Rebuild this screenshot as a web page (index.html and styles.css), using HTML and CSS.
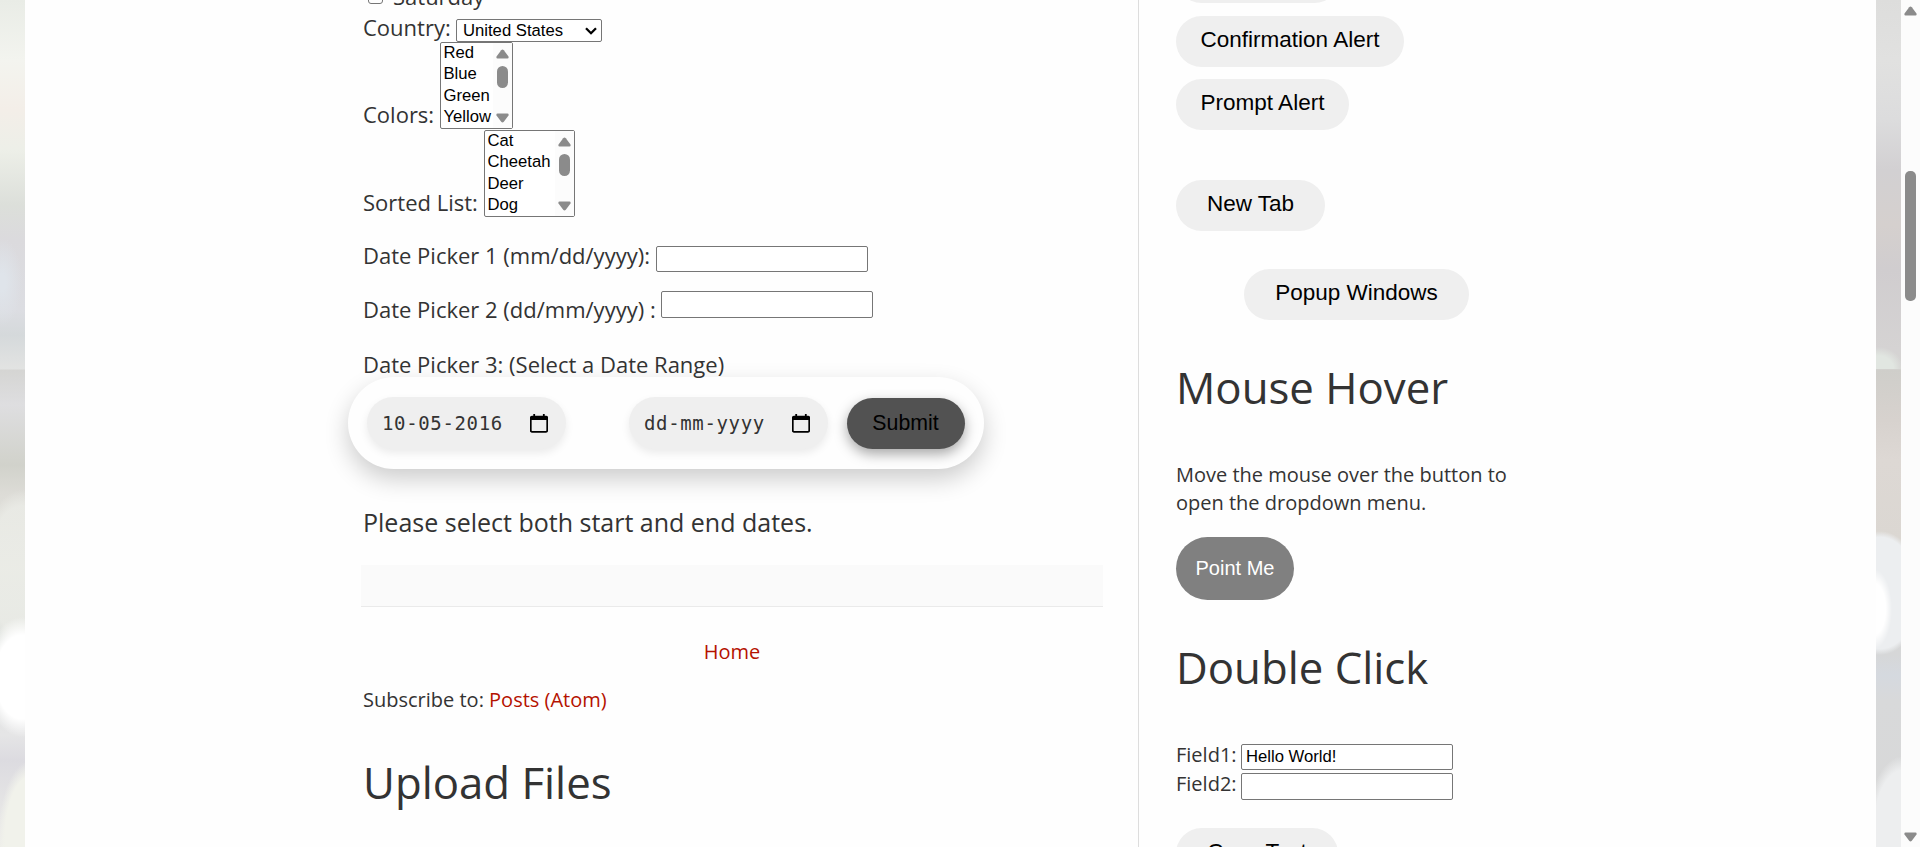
FILE: index.html
```html
<!DOCTYPE html>
<html lang="en">
<head>
<meta charset="utf-8">
<title>Automation Testing Practice</title>
<link rel="stylesheet" href="styles.css">
</head>
<body>
<div class="page">
  <div class="edge edge-left"></div>
  <div class="content">
    <main class="main">
      <div class="row saturday"><span class="checkbox"></span><span class="label">Saturday</span></div>
      <div class="row"><span class="label label-country">Country:</span>
        <div class="dropdown"><span>United States</span><svg width="12" height="8" viewBox="0 0 12 8"><path d="M1 1.2 6 6.2 11 1.2" fill="none" stroke="#000" stroke-width="2.3"/></svg></div>
      </div>
      <div class="row list-row"><span class="label label-colors">Colors:</span>
        <div class="listbox colors">
          <ul><li>Red</li><li>Blue</li><li>Green</li><li>Yellow</li></ul>
          <div class="track"><svg width="13" height="10" viewBox="0 0 13 10"><path d="M5.2 1.2Q6.5-.4 7.8 1.2L12.5 7.6Q13 9.5 11.4 9.5H1.6Q0 9.5.5 7.6Z" fill="#8b8b8b"/></svg><i></i><svg class="down" width="13" height="10" viewBox="0 0 13 10"><path d="M5.2 8.8Q6.5 10.4 7.8 8.8L12.5 2.4Q13 .5 11.4.5H1.6Q0 .5.5 2.4Z" fill="#8b8b8b"/></svg></div>
        </div>
      </div>
      <div class="row list-row"><span class="label label-sorted">Sorted List:</span>
        <div class="listbox animals">
          <ul><li>Cat</li><li>Cheetah</li><li>Deer</li><li>Dog</li></ul>
          <div class="track"><svg width="13" height="10" viewBox="0 0 13 10"><path d="M5.2 1.2Q6.5-.4 7.8 1.2L12.5 7.6Q13 9.5 11.4 9.5H1.6Q0 9.5.5 7.6Z" fill="#8b8b8b"/></svg><i></i><svg class="down" width="13" height="10" viewBox="0 0 13 10"><path d="M5.2 8.8Q6.5 10.4 7.8 8.8L12.5 2.4Q13 .5 11.4.5H1.6Q0 .5.5 2.4Z" fill="#8b8b8b"/></svg></div>
        </div>
      </div>
      <div class="row picker-one"><span class="label label-p1">Date Picker 1 (mm/dd/yyyy):</span><input class="field" type="text"></div>
      <div class="row picker-two"><span class="label label-p2">Date Picker 2 (dd/mm/yyyy) :</span><input class="field" type="text"></div>
      <div class="row picker-three"><span class="label">Date Picker 3: (Select a Date Range)</span></div>
      <div class="range">
        <div class="date"><span>10-05-2016</span><svg width="18" height="19" viewBox="0 0 18 19"><path d="M2 2.5H16Q17.2 2.5 17.2 3.7V16.6Q17.2 17.8 16 17.8H2Q.8 17.8.8 16.6V3.7Q.8 2.5 2 2.5Z" fill="none" stroke="#000" stroke-width="1.7"/><path d="M1 2H17V6H1ZM3.3 0H5.1V3H3.3ZM12.9 0H14.7V3H12.9Z"/></svg></div>
        <div class="date date-end"><span>dd-mm-yyyy</span><svg width="18" height="19" viewBox="0 0 18 19"><path d="M2 2.5H16Q17.2 2.5 17.2 3.7V16.6Q17.2 17.8 16 17.8H2Q.8 17.8.8 16.6V3.7Q.8 2.5 2 2.5Z" fill="none" stroke="#000" stroke-width="1.7"/><path d="M1 2H17V6H1ZM3.3 0H5.1V3H3.3ZM12.9 0H14.7V3H12.9Z"/></svg></div>
        <button class="submit">Submit</button>
      </div>
      <p class="result">Please select both start and end dates.</p>
      <div class="post-footer"></div>
      <p class="home"><a>Home</a></p>
      <p class="subscribe">Subscribe to: <a>Posts (Atom)</a></p>
      <h1 class="title upload">Upload Files</h1>
    </main>
    <aside class="side">
      <button class="pill simple">Simple Alert</button>
      <button class="pill confirm">Confirmation Alert</button>
      <button class="pill prompt">Prompt Alert</button>
      <button class="pill new-tab">New Tab</button>
      <button class="pill popup">Popup Windows</button>
      <h1 class="title">Mouse Hover</h1>
      <p class="hint">Move the mouse over the button to<br>open the dropdown menu.</p>
      <button class="point">Point Me</button>
      <h1 class="title">Double Click</h1>
      <div class="copy-row first"><span>Field1:</span><input class="field" type="text" value="Hello World!"></div>
      <div class="copy-row"><span>Field2:</span><input class="field" type="text"></div>
      <button class="pill copy">Copy Text</button>
    </aside>
  </div>
  <div class="edge edge-right"></div>
  <div class="scrollbar">
    <svg width="13" height="10" viewBox="0 0 13 10"><path d="M5.2 1.2Q6.5-.4 7.8 1.2L12.5 7.6Q13 9.5 11.4 9.5H1.6Q0 9.5.5 7.6Z" fill="#8b8b8b"/></svg>
    <div class="thumb"></div>
    <svg class="down" width="13" height="10" viewBox="0 0 13 10"><path d="M5.2 8.8Q6.5 10.4 7.8 8.8L12.5 2.4Q13 .5 11.4.5H1.6Q0 .5.5 2.4Z" fill="#8b8b8b"/></svg>
  </div>
</div>
</body>
</html>
```
FILE: styles.css
```css
* { box-sizing: border-box; }
body { margin: 0; background: #fefefe; color: #333; font-family: "Open Sans", "Noto Sans", sans-serif; overflow: hidden; }
p, h1, ul { margin: 0; padding: 0; font-weight: 400; }
a { color: #b51200; }
svg { display: block; flex: none; }
.page { display: flex; width: 1920px; height: 847px; overflow: hidden; }
.content { display: flex; flex: none; width: 1851px; height: 847px; background: #fefefe; overflow: hidden; }

.edge { flex: none; width: 25px; height: 847px; }
.edge-left {
  background:
    radial-gradient(ellipse 38px 60px at 22px 677px, #fff 70%, rgba(255,255,255,0) 100%),
    radial-gradient(ellipse 34px 80px at 32px 840px, #f1f2eb 80%, rgba(241,242,235,0) 100%),
    radial-gradient(ellipse 42px 80px at 22px 570px, rgba(235,236,231,.8) 80%, rgba(235,236,231,0) 100%),
    radial-gradient(ellipse 20px 44px at 2px 282px, #dfe4ea 20%, rgba(223,228,234,0) 100%),
    linear-gradient(#e9ece6 0, #f3f4ef 60px, #f3eee8 110px, #edefe8 150px, #dcdfda 205px, #dbdadd 240px, #dcdde2 310px, #d5d9db 335px, #e2e3e2 369px, #d5d5d3 370px, #dedee0 405px, #d1d2cb 465px, #dddcd7 495px, #e7e9e2 570px, #dde1dc 620px, #e5e5e6 735px, #dcdbe0 760px, #eeeeea 847px);
}
.edge-right {
  background:
    radial-gradient(ellipse 18px 40px at -2px 609px, #fff 65%, rgba(255,255,255,0) 100%),
    radial-gradient(ellipse 42px 62px at 4px 593px, #eceef0 90%, rgba(236,238,240,0) 100%),
    radial-gradient(ellipse 36px 72px at 27px 828px, #edeeef 80%, rgba(237,238,239,0) 100%),
    radial-gradient(ellipse 24px 22px at 3px 369px, #e1e6e1 60%, rgba(225,230,225,0) 100%) 0 0 / 25px 369px no-repeat,
    linear-gradient(#dddddc 0, #e1e1e0 60px, #dcdcdd 120px, #d2d0d2 170px, #d5d0ce 225px, #d0cdcf 270px, #d5d3d3 350px, #d5d4d2 369px, #cfceca 370px, #d7d2ce 420px, #ddd8d4 460px, #dbd7d2 540px, #d6d7d8 655px, #d5d9df 675px, #d8d9da 700px, #d8d8d8 847px);
}
.scrollbar { display: flex; flex-direction: column; align-items: center; flex: none; width: 19px; height: 847px; padding: 6px 0 5px; background: #fcfcfc; }
.thumb { width: 11px; height: 130px; margin-top: 155px; border-radius: 5px; background: #8b8b8b; }
.down { margin-top: auto; }

.main { display: flex; flex-direction: column; flex: none; width: 1114px; padding-left: 338px; border-right: 1px solid #ddd; }
.row { display: flex; align-items: flex-start; flex: none; height: 30px; font-size: 22px; line-height: 30px; white-space: nowrap; }
.label { flex: none; }
.saturday { height: 31px; margin-top: -19px; }
.checkbox { width: 15px; height: 15px; margin: 8px 10px 0 5px; border: 1px solid #767676; border-radius: 3px; }
.label-country { width: 93px; }
.label-colors { width: 77px; padding-top: 57px; }
.label-sorted { width: 121px; padding-top: 57px; }
.label-p1 { width: 293px; }
.label-p2 { width: 298px; padding-top: 3px; }
.dropdown { display: flex; align-items: center; justify-content: space-between; width: 146px; height: 23px; margin-top: 7px; padding: 0 4px 0 6px; border: 1px solid #767676; border-radius: 2px; background: #fff; color: #000; font: 16.67px/21px "Liberation Sans", Arial, sans-serif; }
.list-row { height: 88px; }
.listbox { display: flex; justify-content: space-between; height: 87px; border: 1px solid #767676; border-radius: 2px; background: #fff; color: #000; font: 16.67px/21.3px "Liberation Sans", Arial, sans-serif; }
.listbox ul { list-style: none; padding-left: 2.5px; margin-top: -1px; }
.colors { width: 73px; }
.animals { width: 91px; }
.track { display: flex; flex-direction: column; align-items: center; width: 19px; padding: 6px 0 5px; background: #fcfcfc; }
.track i { width: 11px; height: 22px; margin-top: 7px; border-radius: 5.5px; background: #8b8b8b; }
.field { flex: none; width: 212px; height: 26px; margin: 0; padding: 1px 4px; border: 1px solid #767676; border-radius: 2px; background: #fff; color: #000; font: 16.67px "Liberation Sans", Arial, sans-serif; outline: 0; }
.picker-one { margin-top: 22px; }
.picker-one .field { margin-top: 6px; }
.picker-two { margin-top: 21px; height: 34px; }
.picker-two .field { height: 27px; }
.picker-three { position: relative; z-index: 1; margin-top: 24px; height: 28px; }

.range { display: flex; align-items: center; flex: none; width: 636px; height: 92px; margin-left: -15px; padding-left: 19px; border-radius: 46px; background: #fefefe; box-shadow: 0 10px 25px rgba(0,0,0,.2); }
.date { display: flex; align-items: center; justify-content: space-between; width: 199px; height: 52px; padding: 0 18px 0 15px; border-radius: 26px; background: #efefef; color: #333; font: 19px "DejaVu Sans Mono", monospace; letter-spacing: .65px; box-shadow: 0 4px 8px rgba(0,0,0,.08); }
.date-end { margin: 0 18.5px 0 63px; }
.submit { width: 118px; height: 51px; padding: 0; border: 0; border-radius: 25.5px; background: #525252; color: #000; font: 21.3px "Liberation Sans", Arial, sans-serif; box-shadow: 0 5px 13px rgba(0,0,0,.35); }
.result { margin-top: 36px; font-size: 25px; line-height: 34px; }
.post-footer { width: 742px; height: 42px; margin: 26px 0 0 -2px; background: #fafafa; border-bottom: 1px solid #eaeaea; }
.home { width: 738px; margin-top: 31px; text-align: center; font-size: 20px; line-height: 28px; }
.subscribe { margin-top: 20px; font-size: 20px; line-height: 28px; }
.title { flex: none; height: 60px; margin-top: 37px; font-size: 43.75px; line-height: 60px; white-space: nowrap; }
.upload { margin-top: 38px; }

.side { display: flex; flex-direction: column; align-items: flex-start; flex: none; width: 420px; padding-left: 37px; }
.pill { flex: none; height: 51px; padding: 0 0 3px; border: 0; border-radius: 25.5px; background: #efefef; color: #000; font: 22.5px "Liberation Sans", Arial, sans-serif; white-space: nowrap; }
.simple { width: 164px; margin-top: -48px; }
.confirm { width: 228px; margin-top: 13px; }
.prompt { width: 173px; margin-top: 12px; }
.new-tab { width: 149px; margin-top: 50px; }
.popup { width: 225px; margin: 38px 0 0 68px; }
.hint { margin-top: 44px; font-size: 20px; line-height: 28px; white-space: nowrap; }
.point { flex: none; width: 118px; height: 63px; margin-top: 20px; padding: 0; border: 0; border-radius: 31.5px; background: #808080; color: #fff; font: 20px "Liberation Sans", Arial, sans-serif; }
.copy-row { display: flex; flex: none; height: 29px; font-size: 20px; line-height: 30px; }
.copy-row span { width: 65px; }
.copy-row .field { height: 27px; margin-top: 4px; }
.copy-row.first { margin-top: 43px; }
.copy-row.first .field { height: 26px; }
.copy { width: 162px; margin-top: 30px; }
```
